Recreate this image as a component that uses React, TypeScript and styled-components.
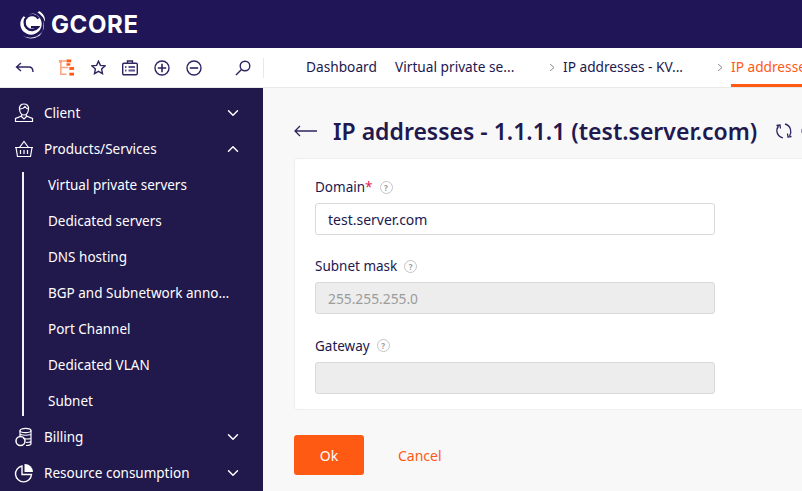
import React from 'react';
import styled, { createGlobalStyle } from 'styled-components';
import { ChevronDown, ChevronUp } from 'lucide-react';

const GlobalStyle = createGlobalStyle`
  html, body {
    margin: 0;
    padding: 0;
    height: 100%;
    overflow: hidden;
  }
  body {
    font-family: "Noto Sans", "Open Sans", sans-serif;
    font-size: 14px;
    color: #21184f;
  }
`;

const Page = styled.div`
  width: 802px;
  height: 491px;
  display: flex;
  flex-direction: column;
  overflow: hidden;
  background: #f8f8f8;
`;

const TopBar = styled.header`
  flex: 0 0 48px;
  display: flex;
  align-items: center;
  padding-left: 17px;
  gap: 6px;
  background: #1f1557;
`;

const LogoText = styled.span`
  font-family: "Inter", sans-serif;
  font-weight: 700;
  font-size: 24px;
  letter-spacing: 0.6px;
  color: #fff;
`;

const ToolBar = styled.div`
  flex: 0 0 40px;
  box-sizing: border-box;
  display: flex;
  align-items: stretch;
  background: #fff;
  border-bottom: 1px solid #e8e8e8;
`;

const Tools = styled.div`
  flex: 0 0 264px;
  box-sizing: border-box;
  display: flex;
  align-items: center;
  padding-left: 15px;
`;

const ToolIcon = styled.svg<{ $gap: number }>`
  flex: none;
  margin-right: ${(p) => p.$gap}px;
`;

const ToolDivider = styled.span`
  width: 1px;
  height: 20px;
  background: #e8e8e8;
`;

const Crumbs = styled.nav`
  flex: 1;
  display: flex;
  align-items: stretch;
  padding-left: 42px;
  overflow: hidden;
`;

const Crumb = styled.a<{ $width: number; $active?: boolean }>`
  flex: 0 0 ${(p) => p.$width}px;
  box-sizing: border-box;
  height: 39px;
  display: flex;
  align-items: center;
  white-space: nowrap;
  font-size: 13.7px;
  color: ${(p) => (p.$active ? '#ff5a14' : '#21184f')};
  border-bottom: 3px solid ${(p) => (p.$active ? '#ff5a14' : 'transparent')};
`;

const CrumbSep = styled.span`
  flex: none;
  box-sizing: border-box;
  width: 15px;
  padding-left: 1px;
  align-self: center;
  display: flex;
  justify-content: flex-start;
  color: #8c8c8c;
`;

const Body = styled.div`
  flex: 1;
  display: flex;
  min-height: 0;
`;

const Sidebar = styled.aside`
  flex: 0 0 263px;
  box-sizing: border-box;
  padding-top: 7px;
  background: #21184c;
  color: #fff;
  overflow: hidden;
`;

const MenuRow = styled.div`
  height: 36px;
  display: flex;
  align-items: center;
  padding: 0 21px 0 14px;
`;

const MenuIcon = styled.svg`
  flex: 0 0 20px;
  margin-right: 10px;
`;

const MenuLabel = styled.span`
  flex: 1;
  font-size: 13.5px;
  white-space: nowrap;
`;

const SubMenu = styled.div`
  position: relative;
  padding-left: 48px;

  &::before {
    content: '';
    position: absolute;
    left: 22px;
    top: 5px;
    bottom: 3px;
    width: 2px;
    background: #f2f2f2;
  }
`;

const SubItem = styled.div`
  height: 36px;
  width: 186px;
  line-height: 36px;
  font-size: 13.5px;
  white-space: nowrap;
  overflow: hidden;
  text-overflow: ellipsis;
`;

const Main = styled.main`
  flex: 1;
  min-width: 0;
  padding: 0 0 0 31px;
  overflow: hidden;
`;

const TitleRow = styled.div`
  box-sizing: border-box;
  height: 70px;
  padding-top: 16px;
  display: flex;
  align-items: center;
  white-space: nowrap;
`;

const TitleIcon = styled.svg`
  flex: none;
`;

const CutOffIcon = styled.svg`
  flex: none;
  margin-left: 7px;
`;

const Title = styled.h1`
  flex: none;
  margin: 0 18px 0 16px;
  font-size: 23px;
  font-weight: 600;
  color: #21184f;
`;

const Card = styled.section`
  box-sizing: border-box;
  width: 560px;
  height: 252px;
  padding: 18px 20px;
  background: #fff;
  border: 1px solid #eeeeee;
  border-radius: 4px;
`;

const Field = styled.div`
  height: 79.4px;
`;

const Label = styled.label`
  box-sizing: border-box;
  height: 26px;
  padding-bottom: 6px;
  display: flex;
  align-items: center;
  font-size: 13.5px;
  color: #21184f;
`;

const Required = styled.span`
  color: #e4174f;
`;

const Help = styled.span`
  box-sizing: border-box;
  width: 13px;
  height: 13px;
  margin-left: 7px;
  border: 1px solid #c4c4c4;
  border-radius: 50%;
  display: flex;
  align-items: center;
  justify-content: center;
  font-size: 8px;
  font-weight: 700;
  color: #9a9a9a;
`;

const Input = styled.input`
  box-sizing: border-box;
  display: block;
  width: 400px;
  height: 32px;
  padding: 0 12px;
  font-family: inherit;
  font-size: 14px;
  color: #21184f;
  background: #fff;
  border: 1px solid #d9d9d9;
  border-radius: 3px;
  outline: none;

  &:disabled {
    font-size: 13.8px;
    color: #9c9c9c;
    background: #ededed;
    -webkit-text-fill-color: #9c9c9c;
    opacity: 1;
  }
`;

const Actions = styled.div`
  margin-top: 25px;
  display: flex;
  align-items: center;
`;

const OkButton = styled.button`
  width: 70px;
  height: 40px;
  padding: 0;
  font-family: inherit;
  font-size: 14px;
  color: #fff;
  background: #ff5a14;
  border: none;
  border-radius: 3px;
`;

const CancelLink = styled.a`
  margin-left: 34px;
  font-size: 14px;
  color: #ff5a14;
`;

const tools = { stroke: '#2d2560', fill: 'none', strokeWidth: 1.4 };
const menu = { stroke: '#fff', fill: 'none', strokeWidth: 1.2 };

const Logo = () => (
  <svg width="28" height="32" viewBox="0 0 26 30">
    <circle cx="13" cy="15" r="10" fill="#fff" />
    <path d="M2 5 Q13 -1 22 5 Q14 3 8 9Z" fill="#1f1557" />
    <path d="M20 10 A7 7 0 1 0 19.5 18 H13" fill="none" stroke="#1f1557" strokeWidth="2.2" />
    <path d="M5 26 Q16 31 24 22 Q25 14 24 11 Q27 20 21 26 Q13 31 5 26Z" fill="#fff" />
    <path d="M21 3 Q27 7 26 13 Q25 8 19 4Z" fill="#fff" />
  </svg>
);

const Tree = () => (
  <ToolIcon $gap={16} width="17" height="18" viewBox="0 0 18 18">
    <path d="M1 1.5H9M3 1.5V15.5H9M3 8.5H11" fill="none" stroke="#ffa27c" strokeWidth="1.6" />
    <path d="M1 0.5H4V3.5H1Z" fill="#ffa27c" />
    <rect x="9" y="0" width="5" height="3" fill="#ff5a14" />
    <rect x="9" y="4" width="4" height="2.5" fill="#ff5a14" />
    <rect x="12" y="8" width="5" height="3" fill="#ff5a14" />
    <rect x="12" y="14" width="5" height="3" fill="#ff5a14" />
  </ToolIcon>
);

function ChevronSmall() {
  return (
    <svg width="6" height="9" viewBox="0 0 6 9">
      <path d="M1 1L5 4.500L1 8" fill="none" stroke="currentColor" strokeWidth="1" />
    </svg>
  );
}

const App: React.FC = () => {
  return (
    <Page>
      <GlobalStyle />
      <TopBar>
        <Logo />
        <LogoText>GCORE</LogoText>
      </TopBar>
      <ToolBar>
        <Tools>
          <ToolIcon $gap={24} width="19" height="12" viewBox="0 0 19 12">
            <path d="M6 1L1.5 5L6 9M1.5 5H14Q18 5 18 10" {...tools} />
          </ToolIcon>
          <Tree />
          <ToolIcon $gap={16} width="15" height="15" viewBox="0 0 15 15">
            <path d="M7.5 1.2L9.4 5.4L14 5.9L10.6 9L11.5 13.6L7.5 11.3L3.5 13.6L4.4 9L1 5.9L5.6 5.4Z" {...tools} />
          </ToolIcon>
          <ToolIcon $gap={16} width="16" height="16" viewBox="0 0 16 16">
            <rect x="0.7" y="3.2" width="14.6" height="11.6" rx="1.2" {...tools} />
            <path d="M5.5 3V1H10.5V3" {...tools} />
            <path d="M3 7H4.5M6.5 7H13M3 10.5H4.5M6.5 10.5H13" {...tools} strokeWidth="1.8" stroke="#5d5690" />
          </ToolIcon>
          <ToolIcon $gap={16} width="16" height="16" viewBox="0 0 16 16">
            <circle cx="8" cy="8" r="7" {...tools} />
            <path d="M3.8 8H12.2M8 3.8V12.2" {...tools} strokeWidth="1.6" />
          </ToolIcon>
          <ToolIcon $gap={33} width="16" height="16" viewBox="0 0 16 16">
            <circle cx="8" cy="8" r="7" {...tools} />
            <path d="M3.8 8H12.2" {...tools} strokeWidth="1.6" />
          </ToolIcon>
          <ToolIcon $gap={12} width="16" height="16" viewBox="0 0 16 16">
            <circle cx="10" cy="6" r="4.8" {...tools} />
            <path d="M6.5 9.5L1 15" {...tools} />
          </ToolIcon>
          <ToolDivider />
        </Tools>
        <Crumbs>
          <Crumb $width={89}>Dashboard</Crumb>
          <Crumb $width={153}>Virtual private se...</Crumb>
          <CrumbSep><ChevronSmall /></CrumbSep>
          <Crumb $width={153}>IP addresses - KV...</Crumb>
          <CrumbSep><ChevronSmall /></CrumbSep>
          <Crumb $width={120} $active>IP addresses - 1.1.1.1</Crumb>
        </Crumbs>
      </ToolBar>
      <Body>
        <Sidebar>
          <MenuRow>
            <MenuIcon width="20" height="20" viewBox="0 0 20 20">
              <path d="M5.5 6.5C5 2.5 7.500 1 10 1S15 2.500 14.500 6.500C14 10 12 12 10 12S6 10 5.500 6.500Z" {...menu} />
              <path d="M5.500 6C8 6 10 5 11 3.500C12 5 13 6 14.500 6" {...menu} />
              <path d="M7.500 11.500L7.500 13L1.500 15.500V18.500H18.500V15.500L12.500 13V11.500M7.500 13.500L10 16L12.500 13.500" {...menu} />
            </MenuIcon>
            <MenuLabel>Client</MenuLabel>
            <ChevronDown size={18} strokeWidth={2} />
          </MenuRow>
          <MenuRow>
            <MenuIcon width="20" height="20" viewBox="0 0 20 20">
              <path d="M1 8.500H19M2 8.500L3.500 17.500H16.500L18 8.500M5.500 8.500L10 2.500L14.500 8.500" {...menu} />
              <path d="M6.500 11V15M10 11V15M13.500 11V15" {...menu} />
            </MenuIcon>
            <MenuLabel>Products/Services</MenuLabel>
            <ChevronUp size={18} strokeWidth={2} />
          </MenuRow>
          <SubMenu>
            <SubItem>Virtual private servers</SubItem>
            <SubItem>Dedicated servers</SubItem>
            <SubItem>DNS hosting</SubItem>
            <SubItem>BGP and Subnetwork announcement</SubItem>
            <SubItem>Port Channel</SubItem>
            <SubItem>Dedicated VLAN</SubItem>
            <SubItem>Subnet</SubItem>
          </SubMenu>
          <MenuRow>
            <MenuIcon width="20" height="20" viewBox="0 0 20 20">
              <ellipse cx="11.500" cy="3.500" rx="5.500" ry="2.200" {...menu} />
              <path d="M6 3.500V9M17 3.500V16.500Q17 18.500 12 18.500M6.500 7.500Q11 9 17 7.500M9 11.500Q13 12.500 17 11.500M12 15.500Q15 15.500 17 14.500" {...menu} />
              <circle cx="6.500" cy="14" r="4.500" {...menu} strokeWidth="1.500" />
            </MenuIcon>
            <MenuLabel>Billing</MenuLabel>
            <ChevronDown size={18} strokeWidth={2} />
          </MenuRow>
          <MenuRow>
            <MenuIcon width="20" height="20" viewBox="0 0 20 20">
              <path d="M8 3A8 8 0 1 0 17.500 11.500H8Z" {...menu} strokeWidth="1.400" />
              <path d="M10.500 1A8 8 0 0 1 19 9H10.500Z" fill="#fff" />
            </MenuIcon>
            <MenuLabel>Resource consumption</MenuLabel>
            <ChevronDown size={18} strokeWidth={2} />
          </MenuRow>
        </Sidebar>
        <Main>
          <TitleRow>
            <TitleIcon width="23" height="12" viewBox="0 0 23 12">
              <path d="M6 1L1 6L6 11M1 6H23" fill="none" stroke="#2d2560" strokeWidth="1.3" />
            </TitleIcon>
            <Title>IP addresses - 1.1.1.1 (test.server.com)</Title>
            <TitleIcon width="18" height="18" viewBox="0 0 18 18">
              <path d="M3.500 4C0.500 8 1.500 14 8 16M1.500 3.500L5 3L5.500 6.500" fill="none" stroke="#2d2560" strokeWidth="1.300" />
              <path d="M10 2C16 3.500 17 10 14.500 14M16.500 14.500L13 15L12.500 11.500" fill="none" stroke="#2d2560" strokeWidth="1.300" />
            </TitleIcon>
            <CutOffIcon width="4" height="8" viewBox="0 0 4 8">
              <circle cx="4" cy="4" r="3" fill="#8f8aa8" />
            </CutOffIcon>
          </TitleRow>
          <Card>
            <Field>
              <Label>Domain<Required>*</Required><Help>?</Help></Label>
              <Input type="text" defaultValue="test.server.com" />
            </Field>
            <Field>
              <Label>Subnet mask<Help>?</Help></Label>
              <Input type="text" defaultValue="255.255.255.0" disabled />
            </Field>
            <Field>
              <Label>Gateway<Help>?</Help></Label>
              <Input type="text" disabled />
            </Field>
          </Card>
          <Actions>
            <OkButton>Ok</OkButton>
            <CancelLink>Cancel</CancelLink>
          </Actions>
        </Main>
      </Body>
    </Page>
  );
};

export default App;
